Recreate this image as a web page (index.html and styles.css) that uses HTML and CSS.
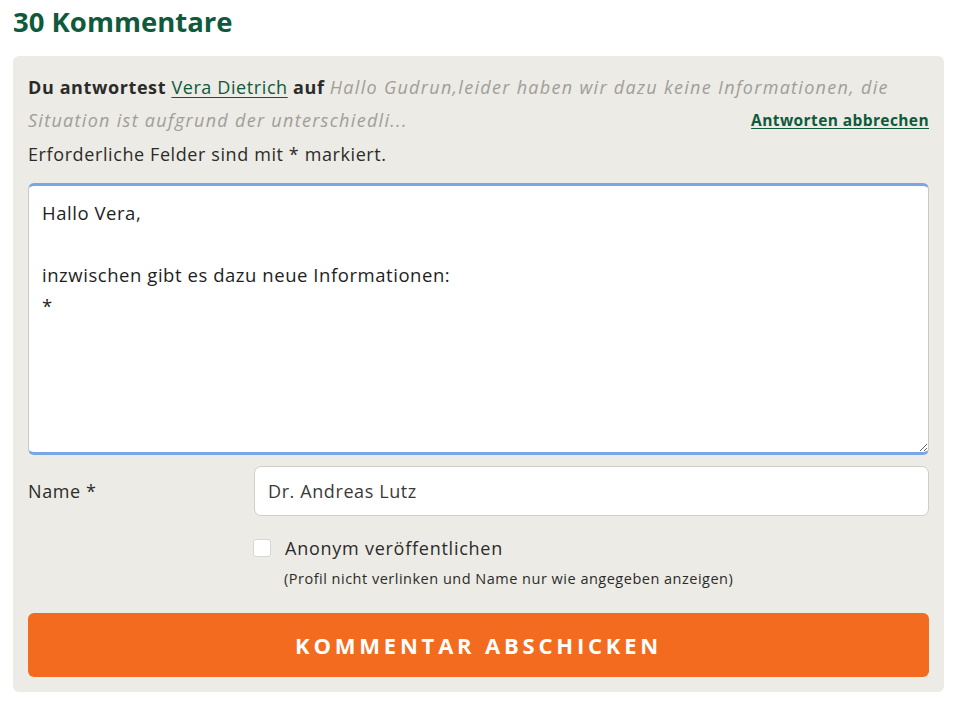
FILE: index.html
```html
<!DOCTYPE html>
<html lang="de">
<head>
<meta charset="utf-8">
<title>Kommentare</title>
<link rel="stylesheet" href="styles.css">
</head>
<body>
<div class="comments">
  <h2 class="title">30 Kommentare</h2>
  <form class="reply-box">
    <div class="reply-info">
      <p class="reply-to"><b>Du antwortest</b> <a href="#" class="user">Vera Dietrich</a> <b>auf</b> <em>Hallo Gudrun,leider haben wir dazu keine Informationen, die Situation ist aufgrund der unterschiedli...</em><a href="#" class="cancel">Antworten abbrechen</a></p>
    </div>
    <p class="required">Erforderliche Felder sind mit * markiert.</p>
    <textarea class="message">Hallo Vera,

inzwischen gibt es dazu neue Informationen:
*</textarea>
    <div class="name-row">
      <label class="name-label" for="name">Name *</label>
      <input class="name-input" id="name" type="text" value="Dr. Andreas Lutz">
    </div>
    <div class="anon-row">
      <label class="anon"><span class="check"></span>Anonym veröffentlichen</label>
      <p class="hint">(Profil nicht verlinken und Name nur wie angegeben anzeigen)</p>
    </div>
    <button type="button" class="submit">KOMMENTAR ABSCHICKEN</button>
  </form>
</div>
</body>
</html>
```

FILE: styles.css
```css
html, body {
  margin: 0;
  padding: 0;
  background: #fff;
}
body {
  font-family: "Open Sans", Lato, Arial, sans-serif;
  color: #2b2b2b;
}
.comments {
  padding: 3px 16px 0 13px;
}
.title {
  margin: 0 0 15px 0;
  font-size: 27.5px;
  line-height: 38px;
  font-weight: 700;
  color: #0f5a3c;
  letter-spacing: 0;
}
.reply-box {
  background: #ecebe5;
  border-radius: 6px;
  padding: 15px 15px 15px 15px;
  display: flex;
  flex-direction: column;
}
.reply-to {
  margin: 0;
  font-size: 18px;
  line-height: 33px;
  letter-spacing: 0.6px;
  color: #2b2b2b;
}
.reply-to b {
  font-weight: 700;
}
.reply-to em {
  color: #9f9e9a;
  font-style: italic;
  letter-spacing: 1.3px;
}
.user {
  color: #0f5a3c;
  text-decoration: underline;
  text-underline-offset: 3px;
  text-decoration-thickness: 1px;
}
.cancel {
  float: right;
  font-size: 15.5px;
  font-weight: 700;
  letter-spacing: 0.4px;
  color: #0f5a3c;
  text-decoration: underline;
  text-underline-offset: 2px;
}
.required {
  margin: 5px 0 17px 0;
  font-size: 18px;
  line-height: 24px;
  letter-spacing: 0.6px;
}
.message {
  box-sizing: border-box;
  width: 100%;
  height: 272px;
  margin: 0;
  padding: 11px 13px;
  font-family: "Open Sans", Lato, Arial, sans-serif;
  font-size: 18.5px;
  line-height: 31px;
  letter-spacing: 0.55px;
  color: #1e1e1e;
  background: #fff;
  border: 1px solid #c9c8c3;
  border-top: 3px solid #78a6e6;
  border-bottom: 3px solid #78a6e6;
  border-radius: 6px;
  resize: vertical;
  outline: none;
}
.name-row {
  display: flex;
  align-items: center;
  margin-top: 11px;
}
.name-label {
  width: 226px;
  font-size: 18px;
  line-height: 24px;
  letter-spacing: 0.6px;
}
.name-input {
  flex: 1;
  box-sizing: border-box;
  height: 50px;
  margin: 0;
  padding: 0 13px;
  font-family: "Open Sans", Lato, Arial, sans-serif;
  font-size: 18px;
  letter-spacing: 0.6px;
  color: #3a3a3a;
  background: #fff;
  border: 1px solid #cfcec9;
  border-radius: 7px;
  outline: none;
}
.anon-row {
  margin: 20px 0 0 225px;
}
.anon {
  display: flex;
  align-items: center;
  font-size: 18px;
  line-height: 24px;
  letter-spacing: 0.75px;
}
.check {
  display: inline-block;
  width: 16px;
  height: 16px;
  margin-right: 14px;
  background: #fff;
  border: 1px solid #d8d7d2;
  border-radius: 3px;
}
.hint {
  margin: 9px 0 0 31px;
  font-size: 14.5px;
  line-height: 20px;
  letter-spacing: 0.5px;
}
.submit {
  margin-top: 24px;
  height: 64px;
  width: 100%;
  background: #f26b1f;
  color: #fff;
  border: none;
  border-radius: 6px;
  font-family: "Open Sans", Lato, Arial, sans-serif;
  font-size: 22px;
  font-weight: 700;
  letter-spacing: 3.8px;
  cursor: pointer;
}
```
